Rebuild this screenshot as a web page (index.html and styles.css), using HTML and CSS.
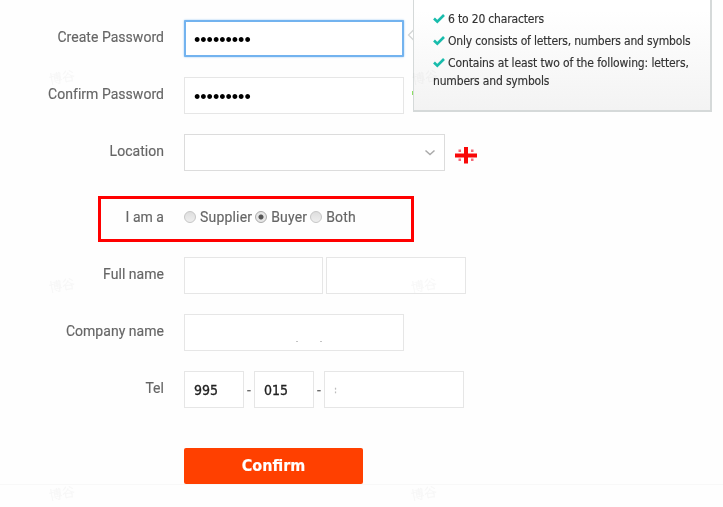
FILE: index.html
```html
<!DOCTYPE html>
<html lang="en">
<head>
<meta charset="utf-8">
<title>Register</title>
<link rel="stylesheet" href="styles.css">
</head>
<body>
<form class="form">
  <div class="row"><label class="label">Create Password</label><div class="field wide focus"><span class="dots">•••••••••</span></div></div>
  <div class="row"><label class="label">Confirm Password</label><div class="field wide"><span class="dots">•••••••••</span></div></div>
  <div class="row"><label class="label">Location</label>
    <div class="field select"><svg class="chevron" width="12" height="8" viewBox="0 0 12 8"><path d="M1.5 1.5 6 5.5 10.500 1.500" fill="none" stroke="#aaa" stroke-width="1.5"/></svg></div>
    <svg class="flag" width="24" height="17" viewBox="0 0 24 17"><path d="M0 6.500h22v4H0zM9 0h4v16.500H9z" fill="#f80808"/><g fill="#f46a78"><rect x="3.500" y="2.500" width="2.500" height="2.500"/><rect x="16" y="2.500" width="2.500" height="2.500"/><rect x="3.500" y="11.500" width="2.500" height="2.500"/><rect x="16" y="11.500" width="2.500" height="2.500"/></g></svg>
  </div>
  <div class="row role"><label class="label">I am a</label>
    <div class="options">
      <label class="option"><i class="radio"></i>Supplier</label>
      <label class="option"><i class="radio checked"></i>Buyer</label>
      <label class="option"><i class="radio"></i>Both</label>
    </div>
  </div>
  <div class="row"><label class="label">Full name</label><div class="field name"></div><div class="field name second"></div></div>
  <div class="row"><label class="label">Company name</label><div class="field wide specks"><i></i><i></i></div></div>
  <div class="row"><label class="label">Tel</label><div class="field country">995</div><span class="dash">-</span><div class="field area">015</div><span class="dash">-</span><div class="field number"><span class="faint">:</span></div></div>
  <button class="confirm" type="button">Confirm</button>
</form>
<div class="divider"></div>
<div class="highlight"></div>
<svg class="pointer" width="7" height="12" viewBox="0 0 7 12"><path d="M6.500 1 1.500 6l5 5" fill="#fff" stroke="#d2d5d5" stroke-width="1.300"/></svg>
<i class="valid"></i>
<aside class="tip">
  <p><svg class="tick" width="12" height="11" viewBox="0 0 12 11"><path d="M1 5.500 4.300 8.700 11 2" fill="none" stroke="#18bcac" stroke-width="2.600"/></svg><span>6 to 20 characters</span></p>
  <p><svg class="tick" width="12" height="11" viewBox="0 0 12 11"><path d="M1 5.500 4.300 8.700 11 2" fill="none" stroke="#18bcac" stroke-width="2.600"/></svg><span>Only consists of letters, numbers and symbols</span></p>
  <p><svg class="tick" width="12" height="11" viewBox="0 0 12 11"><path d="M1 5.500 4.300 8.700 11 2" fill="none" stroke="#18bcac" stroke-width="2.600"/></svg><span class="long">Contains at least two of the following: letters,</span><br>numbers and symbols</p>
</aside>
<span class="mark m1">博谷</span><span class="mark m2">博谷</span><span class="mark m3">博谷</span><span class="mark m4">博谷</span><span class="mark m5">博谷</span><span class="mark m6">博谷</span>
</body>
</html>
```
FILE: styles.css
```css
* { box-sizing: border-box; }
body { margin: 0; width: 723px; height: 507px; overflow: hidden; position: relative; background: #fefefe; font: 14px/20px Roboto, sans-serif; color: #666; -webkit-text-stroke: 0.150px; }
.form { display: flex; flex-direction: column; gap: 20px; padding-top: 20px; }
.row { display: flex; height: 37px; }
.label { width: 164px; margin-right: 20px; padding-top: 7px; text-align: right; letter-spacing: 0.030px; white-space: nowrap; }
.field { height: 37px; border: 1px solid #e6e6e6; background: #fff; display: flex; align-items: center; padding-left: 9px; color: #222; font: 14px "DejaVu Sans Condensed", "Noto Sans", sans-serif; -webkit-text-stroke: 0.300px; }
.wide { width: 220px; }
.focus { border: 2px solid #73b3ef; border-radius: 1px; box-shadow: 0 0 2px #8dc3f3; padding-left: 8px; }
.dots { padding-top: 2px; font: 18px/18px "Liberation Sans", sans-serif; color: #000; -webkit-text-stroke: 0; }
.select { width: 261px; border-color: #dcdcdc; justify-content: flex-end; padding-right: 8px; }
.flag { margin: 13px 0 0 10px; }
.role { height: 46px; }
.role .label { padding-top: 16px; }
.options { display: flex; align-items: flex-start; gap: 3px; padding-top: 16px; letter-spacing: 0.180px; }
.option { display: flex; align-items: center; gap: 4px; height: 20px; }
.radio { width: 12px; height: 12px; border: 1px solid #c6c6c6; border-radius: 50%; background: linear-gradient(#dedede, #eee); }
.checked { background: radial-gradient(circle, #555 0 2px, #e6e6e6 3px); border-color: #aaa; }
.name { width: 139px; }
.second { margin-left: 3px; width: 140px; }
.specks { padding: 17px 0 0 111px; gap: 22px; }
.specks i { width: 2px; height: 1px; background: #c4c4c4; }
.country { width: 60px; }
.area { width: 60px; }
.number { width: 140px; }
.dash { width: 10px; padding-top: 9px; text-align: center; }
.faint { color: #bbb; font-size: 10px; }
.confirm { width: 179px; height: 36px; margin: 20px 0 0 184px; padding: 0 0 2px; border: 0; border-radius: 2px; background: #ff4000; color: #fff; font: bold 16px "DejaVu Sans Condensed", sans-serif; }
.divider { height: 1px; background: #f8f8f8; }
.highlight { position: absolute; left: 98px; top: 196px; width: 316px; height: 46px; border: 3px solid #f00; }
.pointer { position: absolute; left: 407px; top: 29px; }
.valid { position: absolute; left: 412px; top: 91px; width: 2px; height: 4px; background: #8be060; }
.tip { position: absolute; left: 413px; top: -8px; width: 299px; height: 120px; padding: 17px 0 0 19px; border: 1px solid #d5d9d9; border-width: 1px 2px 2px 1px; background: linear-gradient(#fff 15%, #f3f3f3); color: #333; font: 12px/18px "DejaVu Sans Condensed", sans-serif; letter-spacing: -0.170px; white-space: nowrap; }
.tip p { margin: 0 0 4px; }
.long { letter-spacing: -0.120px; }
.tick { margin-right: 3px; vertical-align: -1px; }
.mark { position: absolute; color: #f8f8f8; font: 13px/16px "Noto Sans CJK SC", sans-serif; transform: rotate(-10deg); mix-blend-mode: multiply; }
.m1 { left: 49px; top: 69px; }
.m2 { left: 412px; top: 69px; }
.m3 { left: 49px; top: 277px; }
.m4 { left: 411px; top: 277px; }
.m5 { left: 49px; top: 485px; }
.m6 { left: 411px; top: 485px; }
```
